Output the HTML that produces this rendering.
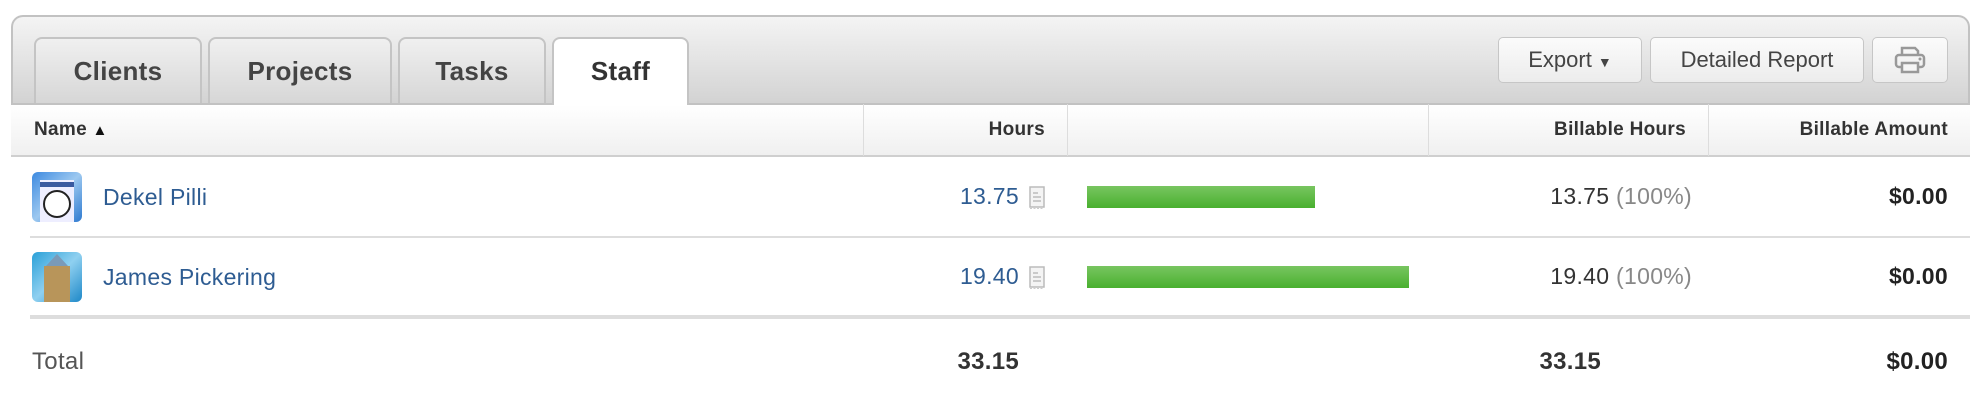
<!DOCTYPE html>
<html><head><meta charset="utf-8"><style>
*{box-sizing:border-box;margin:0;padding:0}
body{width:1978px;height:404px;background:#fff;font-family:"Liberation Sans",sans-serif;position:relative;overflow:hidden}
.a{position:absolute}
.panel{left:11px;top:15px;width:1959px;height:142px;border:2px solid #c2c2c2;border-bottom:none;border-radius:12px 12px 0 0;background:linear-gradient(#f4f4f4,#d2d2d2 88px,#d2d2d2)}
.tab{top:37px;height:67px;border:2px solid #c4c4c4;border-bottom:none;border-radius:8px 8px 0 0;background:linear-gradient(#f0f0f0,#d6d6d6);font-size:26px;font-weight:bold;color:#444;text-align:center;line-height:64px;letter-spacing:0.3px}
.tab.on{background:#fff;color:#333;height:68px;z-index:3}
.hdr{left:11px;top:103px;width:1959px;height:54px;background:linear-gradient(#fff,#f0f0f0);border-top:2px solid #c2c2c2;border-bottom:2px solid #cfcfcf}
.btn{top:37px;height:46px;border:1.5px solid #c6c6c6;border-radius:5px;background:linear-gradient(#fbfbfb,#ececec);font-size:22px;color:#444;text-align:center;line-height:44px}
.th{top:119px;font-size:19px;font-weight:bold;color:#333;letter-spacing:0.3px}
.div{top:104px;width:1px;height:52px;background:#ddd}
.name{font-size:23px;color:#2e5c92;left:103px;letter-spacing:0.3px}
.num{font-size:23px;letter-spacing:0.3px}
.bar{left:1087px;height:22px;background:linear-gradient(#78c560,#49b02f)}
.av{left:32px;width:50px;height:50px;border-radius:6px;overflow:hidden}
.tot{top:348px;font-size:24px;letter-spacing:0.3px}
</style></head><body>
<div class="a panel"></div>
<div class="a tab" style="left:34px;width:168px">Clients</div>
<div class="a tab" style="left:208px;width:184px">Projects</div>
<div class="a tab" style="left:398px;width:148px">Tasks</div>
<div class="a tab on" style="left:552px;width:137px">Staff</div>
<div class="a btn" style="left:1498px;width:144px">Export <span style="font-size:14px">&#9660;</span></div>
<div class="a btn" style="left:1650px;width:214px">Detailed Report</div>
<div class="a btn" style="left:1872px;width:76px">
<svg width="34" height="30" viewBox="0 0 34 30" style="margin-top:7px"><g fill="none" stroke="#999" stroke-width="2.5"><path d="M9 10V3h13l3 3v4"/><rect x="3" y="10" width="28" height="12" rx="3"/><rect x="9" y="18" width="16" height="9" fill="#f5f5f5"/></g><circle cx="27" cy="14" r="1.5" fill="#999"/></svg></div>
<div class="a hdr"></div>
<div class="a div" style="left:863px"></div>
<div class="a div" style="left:1067px"></div>
<div class="a div" style="left:1428px"></div>
<div class="a div" style="left:1708px"></div>
<div class="a th" style="left:34px">Name <span style="font-size:15px;color:#111">&#9650;</span></div>
<div class="a th" style="right:933px">Hours</div>
<div class="a th" style="right:292px">Billable Hours</div>
<div class="a th" style="right:30px">Billable Amount</div>

<div class="a av" style="top:172px;background:linear-gradient(135deg,#3d8ae0,#9cc8f0 50%,#2f7ad0)"><div class="a" style="left:8px;top:8px;width:34px;height:42px;background:#eef"></div><div class="a" style="left:8px;top:10px;width:34px;height:5px;background:#3a5aa0"></div><div class="a" style="left:11px;top:18px;width:28px;height:28px;border:2px solid #222;border-radius:50%;background:#fff"></div></div>
<div class="a name" style="top:184px">Dekel Pilli</div>
<div class="a num" style="top:183px;right:959px;color:#2e5c92">13.75</div>
<svg class="a" style="left:1029px;top:186px" width="16" height="24" viewBox="0 0 16 24"><rect x="1" y="1" width="14" height="20" fill="#f4f4f4" stroke="#bbb" stroke-width="1.5"/><path d="M4 7h5M4 11h8M4 15h8" stroke="#bbb" stroke-width="1.5"/><path d="M1 22h14" stroke="#ccc" stroke-dasharray="2 1.5" stroke-width="2"/></svg>
<div class="a bar" style="top:186px;width:228px"></div>
<div class="a num" style="top:183px;right:286px;color:#333">13.75 <span style="color:#888">(100%)</span></div>
<div class="a num" style="top:183px;right:30px;color:#222;font-weight:bold">$0.00</div>
<div class="a" style="left:30px;top:236px;width:1940px;height:2px;background:#ddd"></div>

<div class="a av" style="top:252px;background:linear-gradient(135deg,#2aa0d8,#8fd0f0 50%,#1e88c8)"><div class="a" style="left:12px;top:14px;width:26px;height:40px;background:#b8955a"></div><div class="a" style="left:14px;top:2px;width:0;height:0;border-left:11px solid transparent;border-right:11px solid transparent;border-bottom:12px solid #7a9ab8"></div></div>
<div class="a name" style="top:264px">James Pickering</div>
<div class="a num" style="top:263px;right:959px;color:#2e5c92">19.40</div>
<svg class="a" style="left:1029px;top:266px" width="16" height="24" viewBox="0 0 16 24"><rect x="1" y="1" width="14" height="20" fill="#f4f4f4" stroke="#bbb" stroke-width="1.5"/><path d="M4 7h5M4 11h8M4 15h8" stroke="#bbb" stroke-width="1.5"/><path d="M1 22h14" stroke="#ccc" stroke-dasharray="2 1.5" stroke-width="2"/></svg>
<div class="a bar" style="top:266px;width:322px"></div>
<div class="a num" style="top:263px;right:286px;color:#333">19.40 <span style="color:#888">(100%)</span></div>
<div class="a num" style="top:263px;right:30px;color:#222;font-weight:bold">$0.00</div>
<div class="a" style="left:30px;top:315px;width:1940px;height:4px;background:#ddd"></div>

<div class="a tot" style="left:32px;color:#555">Total</div>
<div class="a tot" style="right:959px;font-weight:bold;color:#333">33.15</div>
<div class="a tot" style="right:377px;font-weight:bold;color:#333">33.15</div>
<div class="a tot" style="right:30px;font-weight:bold;color:#222">$0.00</div>
</body></html>
